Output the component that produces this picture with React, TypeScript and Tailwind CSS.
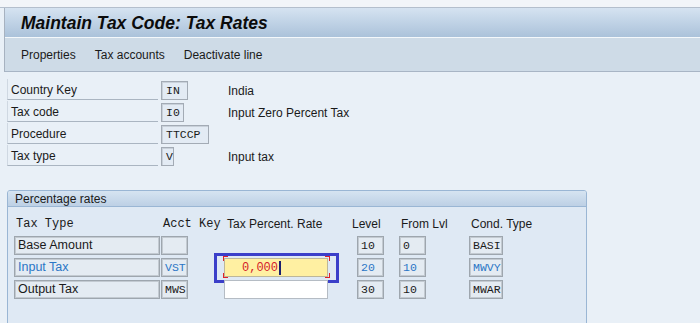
import React from 'react';

const mono = "font-['Liberation_Mono',monospace] text-[11.5px]";

const Field: React.FC<{ value: string; width: string; blue?: boolean }> = ({ value, width, blue }) => (
  <div
    className={`${width} h-[19px] mt-[2px] border border-[#a3abb5] bg-[#e3ebf4] shadow-[inset_1px_1px_0_#c9d1da] pl-[4px] flex items-center ${mono} ${blue ? 'text-[#2a76c6]' : 'text-[#1a1a1a]'}`}
  >
    {value}
  </div>
);

const TableBox: React.FC<{ value?: string; width: string; ml: string; blue?: boolean; sans?: boolean }> = ({
  value,
  width,
  ml,
  blue,
  sans,
}) => (
  <div
    className={`${width} ${ml} h-[19px] border border-[#9ea6ae] bg-[#e4ebf2] shadow-[inset_1px_1px_0_#c3cad1,inset_-1px_-1px_0_#c3cad1] pl-[3px] flex items-center ${
      sans ? "font-['Liberation_Sans',sans-serif] text-[12.5px]" : mono
    } ${blue ? 'text-[#2a76c6]' : 'text-[#1a1a1a]'}`}
  >
    {value}
  </div>
);

const headerRows = [
  { label: 'Country Key', value: 'IN', width: 'w-[27px]', desc: 'India' },
  { label: 'Tax code', value: 'I0', width: 'w-[23px]', desc: 'Input Zero Percent Tax' },
  { label: 'Procedure', value: 'TTCCP', width: 'w-[48px]', desc: '' },
  { label: 'Tax type', value: 'V', width: 'w-[13px]', desc: 'Input tax' },
];

const rateRows = [
  { type: 'Base Amount', key: '', level: '10', from: '0', cond: 'BASI', blue: false, input: 'none' },
  { type: 'Input Tax', key: 'VST', level: '20', from: '10', cond: 'MWVY', blue: true, input: 'focus' },
  { type: 'Output Tax', key: 'MWS', level: '30', from: '10', cond: 'MWAR', blue: false, input: 'empty' },
];

export default function App() {
  return (
    <div className="w-[700px] h-[323px] overflow-hidden bg-[#e9f0f7] font-['Liberation_Sans',sans-serif] text-[12px] text-[#1a1a1a]">
      {/* top strip */}
      <div className="h-[8px] bg-[#f2f5f9] border-b border-[#b4bfcd]" />

      {/* title + toolbar */}
      <div className="ml-[4px] border-l border-[#a7b2c0]">
        <div className="h-[30px] bg-gradient-to-b from-[#d5e3f1] to-[#abc2da] flex items-center pl-[16px] pt-[2px] border-b border-[#f4f8fb]">
          <span className="font-bold italic text-[17.5px] text-[#0b0b0b]">Maintain Tax Code: Tax Rates</span>
        </div>
        <div className="h-[34px] bg-[#cedbe7] border-b border-[#a8b5c5] flex items-center pl-[16px] gap-[19px] text-[12px] text-[#1a1a1a]">
          <span>Properties</span>
          <span>Tax accounts</span>
          <span>Deactivate line</span>
        </div>
      </div>

      {/* header fields */}
      <div className="pt-[7px] pl-[7px]">
        {headerRows.map((r) => (
          <div key={r.label} className="h-[22px] flex">
            <div className="w-[151px] h-[21px] border-b border-l border-b-[#aab5c1] border-l-[#cfd8e2] pl-[3px] pt-[2px] flex items-center">
              {r.label}
            </div>
            <div className="ml-[3px] w-[67px]">
              <Field value={r.value} width={r.width} />
            </div>
            <div className="h-[21px] pt-[2px] flex items-center">{r.desc}</div>
          </div>
        ))}
      </div>

      {/* percentage rates group */}
      <div className="mt-[23px] ml-[7px] w-[580px] h-[140px] rounded-t-[3px] border border-[#9ab6d4] bg-[#dfe9f4]">
        <div className="h-[16px] bg-gradient-to-b from-[#d6e4f1] to-[#bdd0e5] border-b border-[#9ab6d4] rounded-t-[2px] pl-[7px] flex items-center">
          Percentage rates
        </div>

        <div className="mt-[9px] h-[16px] flex items-center">
          <span className={`ml-[8px] w-[147px] ${mono} text-[12px]`}>Tax Type</span>
          <span className={`w-[64px] ${mono} text-[12px]`}>Acct Key</span>
          <span className="w-[125px]">Tax Percent. Rate</span>
          <span className="w-[49px]">Level</span>
          <span className="w-[70px]">From Lvl</span>
          <span>Cond. Type</span>
        </div>

        <div className="mt-[4px] flex flex-col gap-[3px]">
          {rateRows.map((r) => (
            <div key={r.type} className="h-[19px] flex">
              <TableBox value={r.type} width="w-[146px]" ml="ml-[6px]" blue={r.blue} sans />
              <TableBox value={r.key} width="w-[27px]" ml="ml-[1px]" blue={r.blue} />
              <div className="ml-[36px] w-[104px] h-[19px] relative">
                {r.input === 'focus' && (
                  <>
                    <div className="h-full border border-[#bdb79a] bg-[#fff0a2] pl-[17px] flex items-center font-['Liberation_Mono',monospace] text-[12px] text-[#d4202a]">
                      0,000
                      <span className="ml-[1px] w-[1.5px] h-[14px] bg-[#1b1f6e]" />
                    </div>
                    <div className="absolute -left-[10px] -top-[5px] w-[125px] h-[30px] border-[3px] border-[#3b3fc9]" />
                    <div className="absolute -left-[1px] -top-[2px] w-[5px] h-[5px] border-l border-t border-[#e0202a]" />
                    <div className="absolute -right-[2px] -top-[2px] w-[5px] h-[5px] border-r border-t border-[#e0202a]" />
                    <div className="absolute -left-[1px] -bottom-[1px] w-[5px] h-[5px] border-l border-b border-[#e0202a]" />
                    <div className="absolute -right-[2px] -bottom-[1px] w-[5px] h-[5px] border-r border-b border-[#e0202a]" />
                  </>
                )}
                {r.input === 'empty' && <div className="h-full border border-[#b5bcc4] bg-white" />}
              </div>
              <TableBox value={r.level} width="w-[27px]" ml="ml-[29px]" blue={r.blue} />
              <TableBox value={r.from} width="w-[27px]" ml="ml-[15px]" blue={r.blue} />
              <TableBox value={r.cond} width="w-[34px]" ml="ml-[43px]" blue={r.blue} />
            </div>
          ))}
        </div>
      </div>
    </div>
  );
}
